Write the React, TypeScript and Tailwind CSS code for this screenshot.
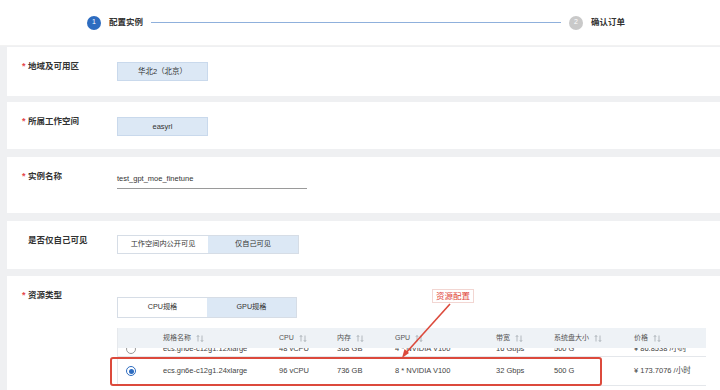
import React from "react";

const font = { fontFamily: '"Liberation Sans", "Noto Sans CJK SC", sans-serif' };

const SortIcon = () => (
  <svg width="8" height="7" viewBox="0 0 8 7" className="ml-[5px] inline-block">
    <path d="M2 6.5V0.5M0.8 1.8L2 0.5L3.2 1.8" stroke="#9aa0a6" strokeWidth="0.7" fill="none" />
    <path d="M6 0.5V6.5M4.8 5.2L6 6.5L7.2 5.2" stroke="#9aa0a6" strokeWidth="0.7" fill="none" />
  </svg>
);

const Label = ({ text, required = true }: { text: string; required?: boolean }) => (
  <div className="w-[95px] shrink-0 flex items-center h-[11px] text-[8.5px] font-semibold text-[#333]">
    {required ? <span className="text-[#e5484d] w-[6px] text-[9px]">*</span> : <span className="w-[6px]" />}
    <span>{text}</span>
  </div>
);

const Card = ({ children, cls }: { children: React.ReactNode; cls: string }) => (
  <div className={`bg-white pl-[15px] pt-[14px] ${cls}`}>{children}</div>
);

const cols = "grid grid-cols-[45px_116px_58px_58px_101px_58px_80px_73px] items-center";

const headers = ["规格名称", "CPU", "内存", "GPU", "带宽", "系统盘大小", "价格"];
const prevRow = ["ecs.gn6e-c12g1.12xlarge", "48 vCPU", "368 GB", "4 * NVIDIA V100", "16 Gbps", "500 G", "¥ 86.8538 /小时"];
const selRow = ["ecs.gn6e-c12g1.24xlarge", "96 vCPU", "736 GB", "8 * NVIDIA V100", "32 Gbps", "500 G", "¥ 173.7076 /小时"];

export default function App() {
  return (
    <div className="w-[720px] h-[390px] overflow-hidden bg-[#eff0f2] relative" style={font}>
      {/* steps */}
      <div className="h-[46px] bg-white border-b border-[#f2f2f2] flex items-center pl-[87px]">
        <div className="w-[14px] h-[14px] rounded-full bg-[#2d6cc0] text-white text-[7px] flex items-center justify-center">1</div>
        <span className="ml-[8px] text-[8.5px] font-semibold text-[#333]">配置实例</span>
        <div className="ml-[8px] w-[410px] h-px bg-[#8fb0dc]" />
        <div className="ml-[8px] w-[14px] h-[14px] rounded-full bg-[#c9c9c9] text-white text-[7px] flex items-center justify-center">2</div>
        <span className="ml-[8px] text-[8.5px] font-semibold text-[#333]">确认订单</span>
      </div>

      <div className="pl-[7px] pt-[1px] flex flex-col">
        <Card cls="h-[49px]">
          <div className="flex items-start">
            <Label text="地域及可用区" />
            <div className="mt-[1px] w-[91px] h-[19px] bg-[#dce8f5] border border-[#c9d9ec] text-[7.5px] text-[#333] flex items-center justify-center">华北2（北京）</div>
          </div>
        </Card>
        <Card cls="h-[47px] mt-[6px]">
          <div className="flex items-start">
            <Label text="所属工作空间" />
            <div className="mt-[1px] w-[91px] h-[19px] bg-[#dce8f5] border border-[#c9d9ec] text-[7.5px] text-[#333] flex items-center justify-center">easyrl</div>
          </div>
        </Card>
        <Card cls="h-[56px] mt-[8px]">
          <div className="flex items-start">
            <Label text="实例名称" />
            <div className="-mt-[1px] w-[190px] h-[19px] border-b border-[#9a9a9a] text-[7.5px] text-[#333] flex items-center">test_gpt_moe_finetune</div>
          </div>
        </Card>
        <Card cls="h-[48px] mt-[8px]">
          <div className="flex items-start">
            <Label text="是否仅自己可见" required={false} />
            <div className="flex border border-[#d6dde6] h-[19px] text-[7.2px] text-[#333]">
              <div className="w-[90px] bg-white flex items-center justify-center">工作空间内公开可见</div>
              <div className="w-[90px] bg-[#dce8f5] flex items-center justify-center">仅自己可见</div>
            </div>
          </div>
        </Card>
        <Card cls="h-[120px] mt-[7px]">
          <Label text="资源类型" />
          <div className="ml-[95px] -mt-[4px]">
            <div className="flex border border-[#d6dde6] h-[21px] w-[180px] text-[7.2px] text-[#333]">
              <div className="w-[90px] bg-white flex items-center justify-center">CPU规格</div>
              <div className="w-[90px] bg-[#dce8f5] flex items-center justify-center">GPU规格</div>
            </div>
            <div className="mt-[10px] w-[589px] border-l border-[#e6e9ed] text-[7.5px] text-[#444]">
              <div className={`${cols} h-[20px] bg-[#eef2f6] text-[7px] text-[#555]`}>
                <div />
                {headers.map((h) => (
                  <div key={h} className="flex items-center">
                    {h}
                    <SortIcon />
                  </div>
                ))}
              </div>
              <div className="h-[9px] overflow-hidden border-b border-[#e4e7eb]">
                <div className={`${cols} h-[21px] -mt-[10px]`}>
                  <div className="pl-[8px]">
                    <div className="w-[10px] h-[10px] rounded-full border border-[#999] bg-white" />
                  </div>
                  {prevRow.map((c, i) => (
                    <div key={i}>{c}</div>
                  ))}
                </div>
              </div>
              <div className={`${cols} h-[29px] bg-white border-b border-[#e4e7eb]`}>
                <div className="pl-[8px]">
                  <div className="w-[10px] h-[10px] rounded-full border border-[#2d6cc0] bg-white flex items-center justify-center">
                    <div className="w-[5px] h-[5px] rounded-full bg-[#2d6cc0]" />
                  </div>
                </div>
                {selRow.map((c, i) => (
                  <div key={i}>{c}</div>
                ))}
              </div>
            </div>
          </div>
        </Card>
      </div>

      {/* annotation */}
      <div className="absolute left-[110px] top-[357px] w-[492px] h-[29px] border-2 border-[#dc4a3c] rounded-[3px]" />
      <div className="absolute left-[432px] top-[289px] w-[42px] h-[14px] bg-white border border-[#f2d6d2] text-[#e0463a] text-[8.5px] flex items-center justify-center">资源配置</div>
      <svg className="absolute left-0 top-0" width="720" height="390">
        <line x1="450" y1="304" x2="405" y2="354" stroke="#dc4a3c" strokeWidth="1.6" />
        <path d="M402 358 L404.5 349 L409 353 Z" fill="#dc4a3c" />
      </svg>
    </div>
  );
}
